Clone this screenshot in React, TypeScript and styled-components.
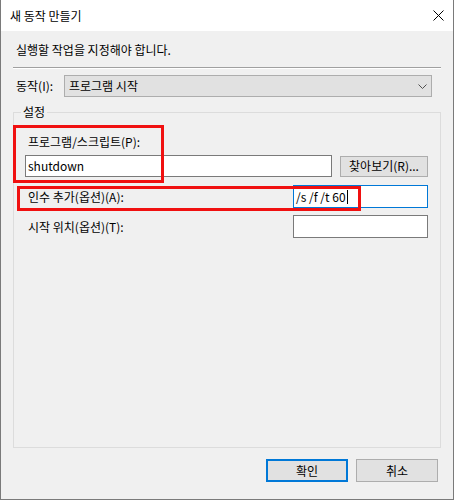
import React from 'react';
import styled, { createGlobalStyle } from 'styled-components';

const Global = createGlobalStyle`
  html, body { margin: 0; padding: 0; background: #f0f0f0; }
  body {
    font-family: "Noto Sans CJK KR", "Noto Sans", sans-serif;
    font-size: 12px;
    color: #000;
  }
  * { box-sizing: border-box; }
`;

const Window = styled.div`
  width: 454px;
  height: 500px;
  border: 1px solid #7a7a7a;
  border-top: none;
  background: #f0f0f0;
  display: flex;
  flex-direction: column;
`;

const TitleBar = styled.div`
  height: 31px;
  flex: none;
  background: #fff;
  display: flex;
  align-items: center;
  justify-content: space-between;
  padding: 0 9px 0 9px;
  line-height: 16px;
`;

const Body = styled.div`
  flex: 1;
  display: flex;
  flex-direction: column;
`;

const Instruction = styled.div`
  margin: 11px 0 0 15px;
  line-height: 16px;
`;

const Separator = styled.div`
  margin: 9px 12px 0;
  height: 2px;
  border-top: 1px solid #a0a0a0;
  border-bottom: 1px solid #ffffff;
`;

const ActionRow = styled.div`
  display: flex;
  align-items: center;
  margin-top: 6px;
  padding-left: 15px;
  height: 22px;
`;

const ActionLabel = styled.span`
  width: 48px;
  line-height: 16px;
`;

const Dropdown = styled.div`
  width: 368px;
  height: 22px;
  background: #e1e1e1;
  border: 1px solid #adadad;
  display: flex;
  align-items: center;
  justify-content: space-between;
  padding: 0 4px;
  line-height: 16px;
`;

const Group = styled.fieldset`
  margin: 7px 12px 0;
  padding: 0;
  min-width: 0;
  height: 344px;
  border: 1px solid #dcdcdc;
`;

const Legend = styled.legend`
  margin-left: 7px;
  padding: 0 2px;
  line-height: 16px;
`;

const GroupBody = styled.div`
  position: relative;
  padding: 14px 12px 0 11px;
`;

const FieldLabel = styled.div`
  padding-left: 3px;
  line-height: 16px;
`;

const Row = styled.div<{ $gap: number }>`
  display: flex;
  align-items: center;
  justify-content: space-between;
  margin-top: ${(p) => p.$gap}px;
`;

const RowLabel = styled.span`
  padding-left: 3px;
  line-height: 16px;
`;

const TextBox = styled.div<{ $w: number; $h: number; $focused?: boolean }>`
  width: ${(p) => p.$w}px;
  height: ${(p) => p.$h}px;
  background: #fff;
  border: 1px solid ${(p) => (p.$focused ? '#0078d7' : '#7a7a7a')};
  display: flex;
  align-items: center;
  padding-left: 2px;
  line-height: 16px;
  white-space: pre;
`;

const Caret = styled.span`
  display: inline-block;
  width: 1px;
  height: 14px;
  margin-left: 1px;
  background: #000;
`;

const Button = styled.div<{ $primary?: boolean; $w: number; $h: number }>`
  width: ${(p) => p.$w}px;
  height: ${(p) => p.$h}px;
  background: #e1e1e1;
  border: ${(p) => (p.$primary ? '2px solid #0078d7' : '1px solid #adadad')};
  display: flex;
  align-items: center;
  justify-content: center;
  line-height: 16px;
`;

const Highlight = styled.div`
  position: absolute;
  border: 3px solid #f01010;
  pointer-events: none;
`;

const Footer = styled.div`
  display: flex;
  justify-content: flex-end;
  gap: 8px;
  margin-top: 11px;
  padding-right: 15px;
`;

export default function App() {
  return (
    <>
      <Global />
      <Window>
        <TitleBar>
          <span>새 동작 만들기</span>
          <svg width="11" height="11" viewBox="0 0 11 11">
            <path d="M0.5 0.5 L10.5 10.5 M10.5 0.5 L0.5 10.5" stroke="#000" strokeWidth="1" fill="none" />
          </svg>
        </TitleBar>
        <Body>
          <Instruction>실행할 작업을 지정해야 합니다.</Instruction>
          <Separator />
          <ActionRow>
            <ActionLabel>동작(I):</ActionLabel>
            <Dropdown>
              <span>프로그램 시작</span>
              <svg width="9" height="5" viewBox="0 0 9 5">
                <path d="M0.5 0.5 L4.5 4.5 L8.5 0.5" stroke="#505050" strokeWidth="1" fill="none" />
              </svg>
            </Dropdown>
          </ActionRow>
          <Group>
            <Legend>설정</Legend>
            <GroupBody>
              <FieldLabel>프로그램/스크립트(P):</FieldLabel>
              <Row $gap={5}>
                <TextBox $w={307} $h={22}>shutdown</TextBox>
                <Button $w={88} $h={21}>찾아보기(R)...</Button>
              </Row>
              <Row $gap={8}>
                <RowLabel>인수 추가(옵션)(A):</RowLabel>
                <TextBox $w={135} $h={23} $focused>
                  /s /f /t 60<Caret />
                </TextBox>
              </Row>
              <Row $gap={7}>
                <RowLabel>시작 위치(옵션)(T):</RowLabel>
                <TextBox $w={135} $h={23} />
              </Row>
              <Highlight style={{ left: -1, top: 5, width: 151, height: 58 }} />
              <Highlight style={{ left: 3, top: 66, width: 344, height: 25 }} />
            </GroupBody>
          </Group>
          <Footer>
            <Button $primary $w={82} $h={23}>확인</Button>
            <Button $w={82} $h={23}>취소</Button>
          </Footer>
        </Body>
      </Window>
    </>
  );
}
